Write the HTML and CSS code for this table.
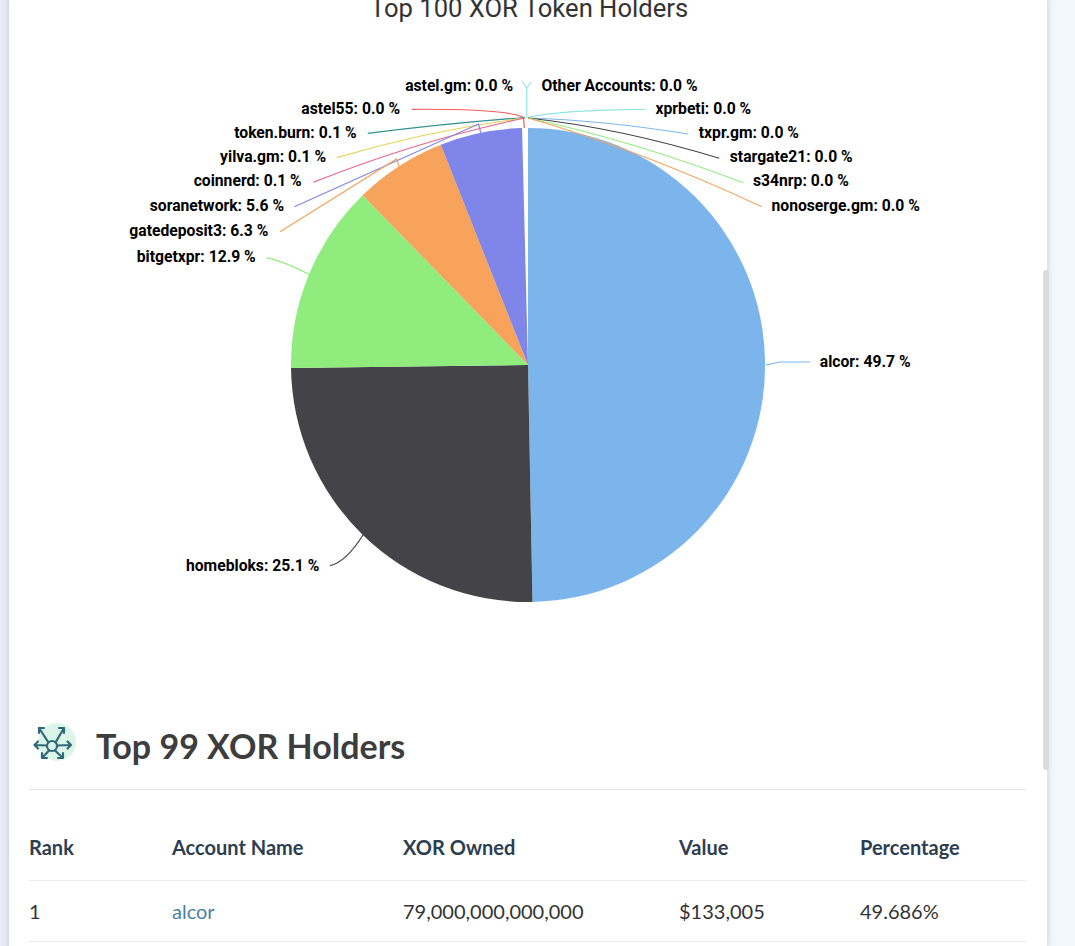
FILE: index.html
```html
<!DOCTYPE html>
<html lang="en">
<head>
<meta charset="utf-8">
<title>Top 100 XOR Token Holders</title>
<link rel="stylesheet" href="styles.css">
</head>
<body>
<div class="page">
  <div class="gutter-left"></div>
  <main class="card">
    <svg class="chart" viewBox="9 0 1038 690" xmlns="http://www.w3.org/2000/svg">
      <text class="chart-title" x="529" y="17">Top 100 XOR Token Holders</text>

      <g class="slices">
        <path fill="#7cb5ec" d="M528,365 L528,128 A237,237 0 0 1 532.47,601.96 Z"/>
        <path fill="#434348" d="M528,365 L532.47,601.96 A237,237 0 0 1 291.02,367.98 Z"/>
        <path fill="#90ed7d" d="M528,365 L291.02,367.98 A237,237 0 0 1 362.57,195.28 Z"/>
        <path fill="#f7a35c" d="M528,365 L362.57,195.28 A237,237 0 0 1 440.75,144.64 Z"/>
        <path fill="#8085e9" d="M528,365 L440.75,144.64 A237,237 0 0 1 522.04,128.07 Z"/>
      </g>

      <g class="connectors" fill="none" stroke-width="1.2">
        <path stroke="#f45b5b" d="M411.7,109.3 C470,109 512,111 523.5,117.5 L524.3,128"/>
        <path stroke="#2b908f" d="M367.7,133.3 Q450,123 525,117.5"/>
        <path stroke="#e4d354" d="M336.7,157.7 Q430,130 525,118"/>
        <path stroke="#f15c80" d="M313.3,182.3 Q420,140 525,118"/>
        <path stroke="#8085e9" d="M294.3,206.7 L478.5,124 L480.8,132.8"/>
        <path stroke="#f7a35c" d="M280,231.7 L396.5,159 L399,166.2"/>
        <path stroke="#90ed7d" d="M266.7,257.7 Q285,262 309,274.3"/>
        <path stroke="#434348" d="M330,565.7 Q346,562 363,535"/>
        <path stroke="#91e8e1" d="M522.5,82 L526.7,88 M531,82 L526.7,88 M526.7,88 L526.7,118"/>
        <path stroke="#91e8e1" d="M645,109.3 Q560,110 528.3,117.3"/>
        <path stroke="#7cb5ec" d="M688.3,134 Q600,120 528,118"/>
        <path stroke="#434348" d="M719.3,158.3 Q620,128 528,118"/>
        <path stroke="#90ed7d" d="M743.3,182.7 Q630,140 528,118"/>
        <path stroke="#f7a35c" d="M761.7,206.7 Q640,150 528,118"/>
        <path stroke="#7cb5ec" d="M810,362 L780,362 L766,365"/>
      </g>

      <g class="labels">
        <text class="lbl lbl-end" x="513" y="90.7">astel.gm: 0.0 %</text>
        <text class="lbl lbl-end" x="400" y="114">astel55: 0.0 %</text>
        <text class="lbl lbl-end" x="356.7" y="138.4">token.burn: 0.1 %</text>
        <text class="lbl lbl-end" x="326" y="162">yilva.gm: 0.1 %</text>
        <text class="lbl lbl-end" x="301.7" y="185.7">coinnerd: 0.1 %</text>
        <text class="lbl lbl-end" x="284" y="210.7">soranetwork: 5.6 %</text>
        <text class="lbl lbl-end" x="268.3" y="235.7">gatedeposit3: 6.3 %</text>
        <text class="lbl lbl-end" x="255.7" y="262">bitgetxpr: 12.9 %</text>
        <text class="lbl lbl-end" x="319.3" y="570.5">homebloks: 25.1 %</text>

        <text class="lbl" x="541.5" y="90.7">Other Accounts: 0.0 %</text>
        <text class="lbl" x="655.5" y="114">xprbeti: 0.0 %</text>
        <text class="lbl" x="698.8" y="138.4">txpr.gm: 0.0 %</text>
        <text class="lbl" x="729.8" y="162">stargate21: 0.0 %</text>
        <text class="lbl" x="753" y="186">s34nrp: 0.0 %</text>
        <text class="lbl" x="771.5" y="210.7">nonoserge.gm: 0.0 %</text>
        <text class="lbl" x="819.8" y="366.5">alcor: 49.7 %</text>
      </g>
    </svg>

    <section class="holders">
      <div class="holders-head">
        <svg class="holders-icon" viewBox="0 0 48 48" xmlns="http://www.w3.org/2000/svg">
          <circle cx="28" cy="21" r="19" fill="#dbf6e8"/>
          <g fill="none" stroke="#30697a" stroke-width="2.2" stroke-linecap="round" stroke-linejoin="round">
            <circle cx="23" cy="25" r="5"/>
            <path d="M19.5,21.5 L10,7 M10,12 L10,7 L15,7"/>
            <path d="M26.5,21.5 L35,7 M30,7 L35,7 L35,12"/>
            <path d="M18,24.5 L5.5,24 M9,20.5 L5.5,24 L9,27.5"/>
            <path d="M28,24.5 L42,24 M38.5,20.5 L42,24 L38.5,27.5"/>
            <path d="M20,29.5 L13,37 M13,32 L13,37 L18,37"/>
            <path d="M26,29.5 L34,37 M34,32 L34,37 L29,37"/>
          </g>
        </svg>
        <h2 class="holders-title">Top 99 XOR Holders</h2>
      </div>
      <hr class="divider">
      <table class="holders-table">
        <colgroup>
          <col class="col-rank">
          <col class="col-name">
          <col class="col-owned">
          <col class="col-value">
          <col class="col-pct">
        </colgroup>
        <thead>
          <tr><th>Rank</th><th>Account Name</th><th>XOR Owned</th><th>Value</th><th>Percentage</th></tr>
        </thead>
        <tbody>
          <tr><td>1</td><td><a class="acct" href="#">alcor</a></td><td>79,000,000,000,000</td><td>$133,005</td><td>49.686%</td></tr>
        </tbody>
      </table>
    </section>
  </main>
  <div class="gutter-right"></div>
</div>
<div class="scroll-thumb"></div>
</body>
</html>
```

FILE: styles.css
```css
html, body {
  margin: 0;
  padding: 0;
}

body {
  height: 946px;
  overflow: hidden;
  background: #f0f8fb;
  font-family: Lato, "Open Sans", sans-serif;
  position: relative;
}

.page {
  display: flex;
  height: 946px;
}

.gutter-left {
  flex: none;
  width: 9px;
  background: linear-gradient(to right, #ececf7, #e2e3ef);
}

.card {
  flex: none;
  width: 1038px;
  background: #ffffff;
  box-shadow: 0 0 5px rgba(70, 80, 100, 0.16);
  position: relative;
  z-index: 1;
}

.gutter-right {
  flex: 1;
  background: linear-gradient(to right, #e4ecf0, #f0f8fb 6px);
}

.chart {
  display: block;
  width: 1038px;
  height: 690px;
}

.chart-title {
  font-family: Roboto, "Liberation Sans", sans-serif;
  font-size: 25.6px;
  fill: #333333;
  text-anchor: middle;
}

.lbl {
  font-family: Roboto, "Liberation Sans", sans-serif;
  font-weight: 700;
  font-size: 15.7px;
  fill: #000000;
}

.lbl-end {
  text-anchor: end;
}

.holders {
  padding: 0 21px 0 20px;
}

.holders-head {
  display: flex;
  align-items: flex-start;
  gap: 19px;
  padding-top: 31px;
}

.holders-icon {
  flex: none;
  width: 48px;
  height: 48px;
  display: block;
}

.holders-title {
  margin: 3px 0 0;
  font-family: Lato, "Open Sans", sans-serif;
  font-weight: 700;
  font-size: 34px;
  line-height: 44px;
  color: #3d3d3d;
}

.divider {
  margin: 20px 0 0;
  border: 0;
  border-top: 1px solid #e4e6e8;
  height: 0;
}

.holders-table {
  width: 100%;
  margin-top: 30px;
  border-collapse: collapse;
  table-layout: fixed;
}

.col-rank { width: 143px; }
.col-name { width: 231px; }
.col-owned { width: 276px; }
.col-value { width: 181px; }
.col-pct { width: auto; }

.holders-table th {
  text-align: left;
  font-weight: 700;
  font-size: 20px;
  line-height: 24px;
  color: #2c3e50;
  padding: 15px 0 21px;
  border-bottom: 1px solid #e8ebee;
}

.holders-table td {
  text-align: left;
  font-weight: 400;
  font-size: 20px;
  line-height: 24px;
  color: #333333;
  padding: 18px 0 18px;
  border-bottom: 1px solid #e8ebee;
}

.acct {
  color: #4a7fa5;
  text-decoration: none;
}

.scroll-thumb {
  position: absolute;
  left: 1043px;
  top: 270px;
  width: 6px;
  height: 500px;
  border-radius: 3px;
  background: #dcdcdc;
  z-index: 2;
}
```
